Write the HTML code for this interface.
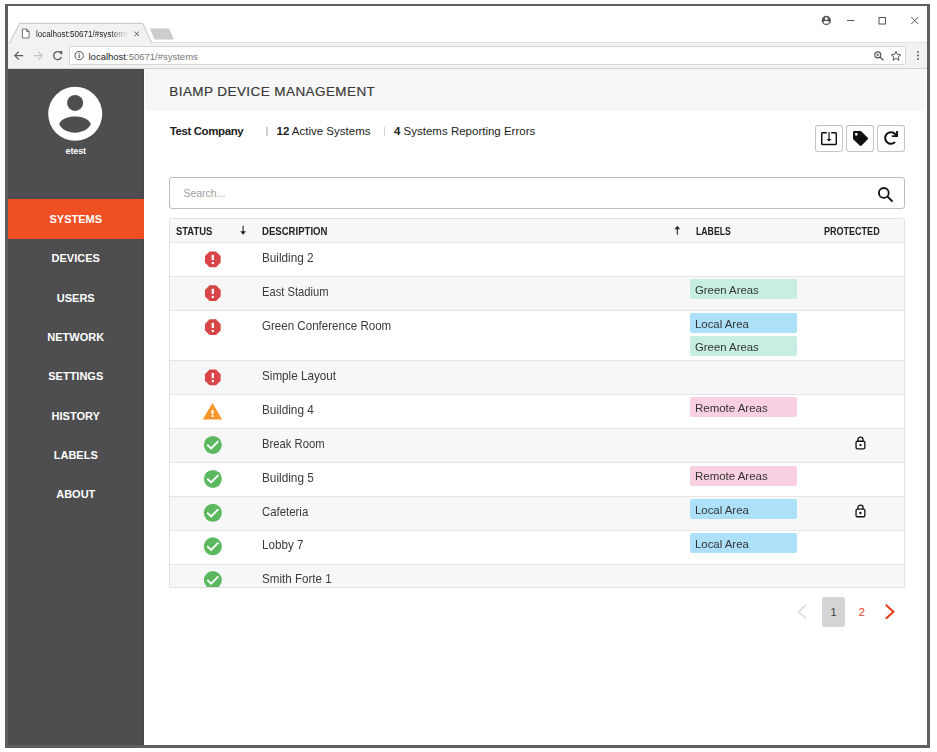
<!DOCTYPE html>
<html><head><meta charset="utf-8">
<style>
*{margin:0;padding:0;box-sizing:border-box}
html,body{width:937px;height:752px;overflow:hidden;background:#fff;font-family:"Liberation Sans",sans-serif}
.a{position:absolute}
#frame{left:5px;top:4px;width:925px;height:744px;border:3px solid #5e5e5e;border-top-width:2.5px}
#tabstrip{left:8px;top:6.5px;width:919px;height:36px;background:#fff}
#toolbar{left:8px;top:42px;width:919px;height:26.7px;background:#f2f2f2;border-top:1px solid #e3e3e3;border-bottom:1px solid #d4d4d4}
#addr{left:69px;top:45.9px;width:836.5px;height:18.8px;background:#fff;border:1px solid #d6d6d6;border-radius:2px}
#sidebar{left:8px;top:68.7px;width:135.5px;height:676.3px;background:#4e4e50}
#hdr{left:144.6px;top:68.7px;width:781px;height:42.3px;background:#f7f7f7}
.nav{position:absolute;left:8px;width:135.5px;text-align:center;color:#fff;font-weight:bold;font-size:11px;height:40px;line-height:40px}
.t{position:absolute;white-space:nowrap;line-height:1}
</style></head><body>
<div class="a" id="frame"></div>
<div class="a" id="tabstrip"></div>
<div class="a" id="toolbar"></div>
<svg class="a" style="left:0;top:0" width="937" height="70">
  <path d="M9.5 43 L19.7 23.3 L142.7 23.3 L151.8 43" fill="#f2f2f2" stroke="#c4c4c4" stroke-width="1"/>
  <path d="M150.8 29 L168.6 29 L172.9 38.9 L155 38.9 Z" fill="#cdcdcd" stroke="#c8c8c8" stroke-width="1.2" stroke-linejoin="round"/>
  <!-- page icon -->
  <path d="M22.4 29 h4.2 l2.5 2.5 v6.5 h-6.7 z M26.6 29 v2.5 h2.5" fill="#fff" stroke="#6a6a6a" stroke-width="0.95"/>
  <!-- tab close -->
  <path d="M134.4 31.5 L139 36.1 M139 31.5 L134.4 36.1" stroke="#555" stroke-width="0.95"/>
  <!-- window controls -->
  <circle cx="826.3" cy="20.45" r="4.6" fill="#555"/>
  <circle cx="826.3" cy="18.7" r="1.4" fill="#fff"/>
  <ellipse cx="826.3" cy="22.4" rx="2.9" ry="1.45" fill="#fff"/>
  <path d="M847 20.5 H854.3" stroke="#555" stroke-width="1"/>
  <rect x="879" y="17.5" width="6.5" height="6.5" fill="none" stroke="#555" stroke-width="1"/>
  <path d="M911.3 17 L918.2 24 M918.2 17 L911.3 24" stroke="#555" stroke-width="1"/>
  <!-- back / fwd / reload -->
  <path d="M14.8 55.6 H23.2 M18.8 51.6 L14.8 55.6 L18.8 59.6" fill="none" stroke="#5a5a5a" stroke-width="1.2"/>
  <path d="M33.8 55.6 H42.3 M38.3 51.6 L42.3 55.6 L38.3 59.6" fill="none" stroke="#c4c4c4" stroke-width="1.2"/>
  <path d="M61 53.4 A4 4 0 1 0 61.4 57" fill="none" stroke="#5a5a5a" stroke-width="1.3"/>
  <path d="M58.8 51.6 L62.4 51 L62 55 Z" fill="#5a5a5a"/>
</svg>
<div class="a" id="addr"></div>
<svg class="a" style="left:0;top:0" width="937" height="70">
  <circle cx="79.2" cy="55.6" r="4.2" fill="none" stroke="#555" stroke-width="1"/>
  <path d="M79.2 54.5 V58" stroke="#555" stroke-width="1.1"/>
  <circle cx="79.2" cy="53.1" r="0.65" fill="#555"/>
  <circle cx="877.8" cy="54.9" r="3.0" fill="none" stroke="#555" stroke-width="1.1"/>
  <path d="M880 57.1 L883.4 60.3" stroke="#555" stroke-width="1.3"/>
  <path d="M876.3 54.9 H879.3 M877.8 53.4 V56.4" stroke="#555" stroke-width="0.8"/>
  <path d="M896 51.3 L897.4 54.5 L900.8 54.8 L898.2 57 L899 60.3 L896 58.5 L893 60.3 L893.8 57 L891.2 54.8 L894.6 54.5 Z" fill="none" stroke="#555" stroke-width="1" stroke-linejoin="miter"/>
  <circle cx="918" cy="52" r="0.95" fill="#555"/>
  <circle cx="918" cy="55.5" r="0.95" fill="#555"/>
  <circle cx="918" cy="59" r="0.95" fill="#555"/>
</svg>
<div class="t" style="left:35.9px;top:29.6px;font-size:8.5px;color:#222;width:92px;overflow:hidden;-webkit-mask-image:linear-gradient(90deg,#000 80%,transparent)"><span style="display:inline-block;transform:scaleX(0.95);transform-origin:0 0">localhost:50671/#systems</span></div>
<div class="t" style="left:88.5px;top:51.5px;font-size:9.5px;color:#222">localhost<span style="color:#777">:50671/#systems</span></div>

<div class="a" id="sidebar"></div>
<div class="a" style="left:142px;top:68.7px;width:1.2px;height:676.3px;background:#434345"></div>
<div class="a" id="hdr"></div>
<!-- avatar -->
<svg class="a" style="left:0;top:70px" width="150" height="100">
  <circle cx="75.2" cy="43.8" r="27" fill="#fff"/>
  <circle cx="75.1" cy="32.9" r="8" fill="#4e4e50"/>
  <path d="M59.1 54.1 C62.5 43.8 87.5 43.8 90.9 54.1 C86 65.5 64 65.5 59.1 54.1 Z" fill="#4e4e50"/>
</svg>
<div class="t" style="left:8px;width:135.5px;text-align:center;top:146.9px;font-size:9px;font-weight:bold;color:#fff;letter-spacing:-0.1px">etest</div>
<div class="a" style="left:8px;top:199px;width:135.5px;height:40px;background:#f04e23"></div>
<div class="nav" style="top:198.5px">SYSTEMS</div>
<div class="nav" style="top:238.0px">DEVICES</div>
<div class="nav" style="top:277.5px">USERS</div>
<div class="nav" style="top:316.8px">NETWORK</div>
<div class="nav" style="top:356.1px">SETTINGS</div>
<div class="nav" style="top:395.5px">HISTORY</div>
<div class="nav" style="top:434.8px">LABELS</div>
<div class="nav" style="top:474.1px">ABOUT</div>

<div class="t" style="left:169.3px;top:85.2px;font-size:13.5px;color:#3a3a3a;letter-spacing:0.42px;-webkit-text-stroke:0.2px #3a3a3a">BIAMP DEVICE MANAGEMENT</div>
<div class="t" style="left:169.7px;top:126px;font-size:11.5px;color:#222;letter-spacing:-0.4px"><b>Test Company</b></div>
<div class="a" style="left:266.4px;top:127px;width:1.4px;height:8.6px;background:#d2d2d2"></div>
<div class="t" style="left:276.5px;top:126px;font-size:11.5px;color:#222"><b>12</b> Active Systems</div>
<div class="a" style="left:384px;top:127px;width:1.4px;height:8.6px;background:#d2d2d2"></div>
<div class="t" style="left:394px;top:126px;font-size:11.5px;color:#222"><b>4</b> Systems Reporting Errors</div>

<!-- search -->
<div class="a" style="left:169.4px;top:177.4px;width:736px;height:31.2px;border:1.2px solid #bdbdbd;border-radius:3px;background:#fff"></div>
<div class="t" style="left:183.4px;top:188px;font-size:10.5px;color:#a0a0a0">Search...</div>
<!-- buttons -->
<div class="a" style="left:815.3px;top:124.5px;width:27.3px;height:27.2px;border:1px solid #c6c6c6;border-top:1.4px solid #bdbdbd;border-radius:3px;background:#fff"></div>
<div class="a" style="left:846.3px;top:124.5px;width:27.4px;height:27.2px;border:1px solid #c6c6c6;border-top:1.4px solid #bdbdbd;border-radius:3px;background:#fff"></div>
<div class="a" style="left:877.4px;top:124.5px;width:27.4px;height:27.2px;border:1px solid #c6c6c6;border-top:1.4px solid #bdbdbd;border-radius:3px;background:#fff"></div>
<svg class="a" style="left:0;top:0" width="937" height="220">
  <path transform="translate(820.3 129.5) scale(0.727)" d="M12 16.6l3.5-3.7h-2.7v-9.4h-1.6v9.4H8.5l3.5 3.7zm9-13.1h-6v1.99h6v14.03H3V5.49h6V3.5H3c-1.1 0-2 .9-2 2v14c0 1.1.9 2 2 2h18c1.1 0 2-.9 2-2v-14c0-1.1-.9-2-2-2z" fill="#111"/>
  <path transform="translate(853 131) scale(0.0293)" d="M0 252.1V48C0 21.5 21.5 0 48 0h204.1a48 48 0 0 1 33.9 14.1l211.9 211.9c18.7 18.7 18.7 49.1 0 67.9L293.8 497.9c-18.7 18.7-49.1 18.7-67.9 0L14.1 286.1A48 48 0 0 1 0 252.1zM112 64c-26.5 0-48 21.5-48 48s21.5 48 48 48 48-21.5 48-48-21.5-48-48-48z" fill="#111"/>
  <path transform="translate(884 131) scale(0.0273)" d="M500.33 0h-47.41a12 12 0 0 0-12 12.57l4 82.76A247.42 247.42 0 0 0 256 8C119.34 8 7.9 119.530 8 256.19 8.1 393.07 119.1 504 256 504a247.1 247.1 0 0 0 166.18-63.91 12 12 0 0 0 .48-17.43l-34-34a12 12 0 0 0-16.38-.55A176 176 0 1 1 402.1 157.8l-101.53-4.87a12 12 0 0 0-12.57 12v47.41a12 12 0 0 0 12 12h200.33a12 12 0 0 0 12-12V12a12 12 0 0 0-12-12z" fill="#111"/>
  <!-- search icon -->
  <circle cx="883.8" cy="192.9" r="4.9" fill="none" stroke="#111" stroke-width="1.8"/>
  <path d="M887.6 196.7 L891.9 201" stroke="#111" stroke-width="1.9" stroke-linecap="round"/>
</svg>
<!--TABLE-->
<div class="a" id="tbl" style="left:169.4px;top:218.4px;width:736px;height:369.6px;border:1px solid #e2e2e2;border-radius:3px 3px 0 0;overflow:hidden;background:#fff">
<div class="a" style="left:0;top:0;width:734px;height:24px;background:#f7f7f7;border-bottom:1px solid #e4e4e4"></div>
<div class="t" style="left:5.90px;top:7.30px;font-size:10.2px;color:#222;font-weight:bold;transform:scaleX(0.9244);transform-origin:0 0">STATUS</div>
<div class="t" style="left:91.50px;top:7.30px;font-size:10.2px;color:#222;font-weight:bold;transform:scaleX(0.9395);transform-origin:0 0">DESCRIPTION</div>
<div class="t" style="left:525.80px;top:7.30px;font-size:10.2px;color:#222;font-weight:bold;transform:scaleX(0.8554);transform-origin:0 0">LABELS</div>
<div class="t" style="left:653.90px;top:7.30px;font-size:10.2px;color:#222;font-weight:bold;transform:scaleX(0.8858);transform-origin:0 0">PROTECTED</div>
<div class="a" style="left:0;top:23.0px;width:734px;height:33.9px;background:#fff;border-top:1px solid #e6e6e6"></div>
<div class="t" style="left:92.00px;top:31.65px;font-size:13.2px;color:#3a3a3a;transform:scaleX(0.8905);transform-origin:0 0">Building 2</div>
<div class="a" style="left:0;top:56.9px;width:734px;height:34.0px;background:#f7f7f7;border-top:1px solid #e6e6e6"></div>
<div class="t" style="left:92.00px;top:65.55px;font-size:13.2px;color:#3a3a3a;transform:scaleX(0.8487);transform-origin:0 0">East Stadium</div>
<div class="a" style="left:519.6px;top:60.1px;width:107.2px;height:20px;background:#c6eee3;border-radius:2px"></div>
<div class="t" style="left:524.90px;top:65.96px;font-size:11.4px;color:#333;transform:scaleX(0.9967);transform-origin:0 0">Green Areas</div>
<div class="a" style="left:0;top:90.9px;width:734px;height:50.2px;background:#fff;border-top:1px solid #e6e6e6"></div>
<div class="t" style="left:92.00px;top:99.55px;font-size:13.2px;color:#3a3a3a;transform:scaleX(0.8772);transform-origin:0 0">Green Conference Room</div>
<div class="a" style="left:519.6px;top:94.1px;width:107.2px;height:20px;background:#ade1fa;border-radius:2px"></div>
<div class="t" style="left:524.90px;top:99.96px;font-size:11.4px;color:#333;transform:scaleX(0.9996);transform-origin:0 0">Local Area</div>
<div class="a" style="left:519.6px;top:117.0px;width:107.2px;height:20px;background:#c6eee3;border-radius:2px"></div>
<div class="t" style="left:524.90px;top:122.86px;font-size:11.4px;color:#333;transform:scaleX(0.9967);transform-origin:0 0">Green Areas</div>
<div class="a" style="left:0;top:141.1px;width:734px;height:33.7px;background:#f7f7f7;border-top:1px solid #e6e6e6"></div>
<div class="t" style="left:92.00px;top:149.75px;font-size:13.2px;color:#3a3a3a;transform:scaleX(0.8861);transform-origin:0 0">Simple Layout</div>
<div class="a" style="left:0;top:174.8px;width:734px;height:34.2px;background:#fff;border-top:1px solid #e6e6e6"></div>
<div class="t" style="left:92.00px;top:183.45px;font-size:13.2px;color:#3a3a3a;transform:scaleX(0.8939);transform-origin:0 0">Building 4</div>
<div class="a" style="left:519.6px;top:178.0px;width:107.2px;height:20px;background:#f8d0e2;border-radius:2px"></div>
<div class="t" style="left:524.90px;top:183.86px;font-size:11.4px;color:#333;transform:scaleX(1.0067);transform-origin:0 0">Remote Areas</div>
<div class="a" style="left:0;top:209.0px;width:734px;height:34.0px;background:#f7f7f7;border-top:1px solid #e6e6e6"></div>
<div class="t" style="left:92.00px;top:217.65px;font-size:13.2px;color:#3a3a3a;transform:scaleX(0.8530);transform-origin:0 0">Break Room</div>
<div class="a" style="left:0;top:243.0px;width:734px;height:33.9px;background:#fff;border-top:1px solid #e6e6e6"></div>
<div class="t" style="left:92.00px;top:251.65px;font-size:13.2px;color:#3a3a3a;transform:scaleX(0.8939);transform-origin:0 0">Building 5</div>
<div class="a" style="left:519.6px;top:246.2px;width:107.2px;height:20px;background:#f8d0e2;border-radius:2px"></div>
<div class="t" style="left:524.90px;top:252.06px;font-size:11.4px;color:#333;transform:scaleX(1.0067);transform-origin:0 0">Remote Areas</div>
<div class="a" style="left:0;top:276.9px;width:734px;height:33.5px;background:#f7f7f7;border-top:1px solid #e6e6e6"></div>
<div class="t" style="left:92.00px;top:285.55px;font-size:13.2px;color:#3a3a3a;transform:scaleX(0.8639);transform-origin:0 0">Cafeteria</div>
<div class="a" style="left:519.6px;top:280.1px;width:107.2px;height:20px;background:#ade1fa;border-radius:2px"></div>
<div class="t" style="left:524.90px;top:285.96px;font-size:11.4px;color:#333;transform:scaleX(0.9996);transform-origin:0 0">Local Area</div>
<div class="a" style="left:0;top:310.4px;width:734px;height:33.8px;background:#fff;border-top:1px solid #e6e6e6"></div>
<div class="t" style="left:92.00px;top:319.05px;font-size:13.2px;color:#3a3a3a;transform:scaleX(0.8831);transform-origin:0 0">Lobby 7</div>
<div class="a" style="left:519.6px;top:313.6px;width:107.2px;height:20px;background:#ade1fa;border-radius:2px"></div>
<div class="t" style="left:524.90px;top:319.46px;font-size:11.4px;color:#333;transform:scaleX(0.9996);transform-origin:0 0">Local Area</div>
<div class="a" style="left:0;top:344.2px;width:734px;height:34.0px;background:#f7f7f7;border-top:1px solid #e6e6e6"></div>
<div class="t" style="left:92.00px;top:352.85px;font-size:13.2px;color:#3a3a3a;transform:scaleX(0.8801);transform-origin:0 0">Smith Forte 1</div>
<svg class="a" style="left:0;top:0" width="736" height="370">
<polygon points="50.65,43.55 46.05,48.15 39.55,48.15 34.95,43.55 34.95,37.05 39.55,32.45 46.05,32.45 50.65,37.05" fill="#d84648"/>
<rect x="41.70" y="35.90" width="2.2" height="5.2" fill="#fff"/>
<rect x="41.70" y="43.00" width="2.2" height="2.1" fill="#fff"/>
<polygon points="50.65,77.45 46.05,82.05 39.55,82.05 34.95,77.45 34.95,70.95 39.55,66.35 46.05,66.35 50.65,70.95" fill="#d84648"/>
<rect x="41.70" y="69.80" width="2.2" height="5.2" fill="#fff"/>
<rect x="41.70" y="76.90" width="2.2" height="2.1" fill="#fff"/>
<polygon points="50.65,111.45 46.05,116.05 39.55,116.05 34.95,111.45 34.95,104.95 39.55,100.35 46.05,100.35 50.65,104.95" fill="#d84648"/>
<rect x="41.70" y="103.80" width="2.2" height="5.2" fill="#fff"/>
<rect x="41.70" y="110.90" width="2.2" height="2.1" fill="#fff"/>
<polygon points="50.65,161.65 46.05,166.25 39.55,166.25 34.95,161.65 34.95,155.15 39.55,150.55 46.05,150.55 50.65,155.15" fill="#d84648"/>
<rect x="41.70" y="154.00" width="2.2" height="5.2" fill="#fff"/>
<rect x="41.70" y="161.10" width="2.2" height="2.1" fill="#fff"/>
<path d="M42.50 183.90 L52.10 200.60 L32.70 200.60 Z" fill="#f8962c"/>
<rect x="41.40" y="191.20" width="2.2" height="3.9" fill="#fff"/>
<rect x="41.40" y="196.10" width="2.2" height="1.9" fill="#fff"/>
<circle cx="42.85" cy="225.90" r="9" fill="#5cb85f"/>
<path d="M37.25 225.80 L41.15 229.50 L48.35 222.20" fill="none" stroke="#fff" stroke-width="1.9"/>
<path d="M687.85 222.40 V220.80 A2.6 2.6 0 0 1 693.05 220.80 V222.40" fill="none" stroke="#111" stroke-width="1.3"/>
<rect x="686.05" y="222.25" width="8.8" height="7.6" rx="1.3" fill="#fff" stroke="#111" stroke-width="1.3"/>
<circle cx="690.45" cy="226.10" r="1.2" fill="#111"/>
<circle cx="42.85" cy="259.90" r="9" fill="#5cb85f"/>
<path d="M37.25 259.80 L41.15 263.50 L48.35 256.20" fill="none" stroke="#fff" stroke-width="1.9"/>
<circle cx="42.85" cy="293.80" r="9" fill="#5cb85f"/>
<path d="M37.25 293.70 L41.15 297.40 L48.35 290.10" fill="none" stroke="#fff" stroke-width="1.9"/>
<path d="M687.85 290.30 V288.70 A2.6 2.6 0 0 1 693.05 288.70 V290.30" fill="none" stroke="#111" stroke-width="1.3"/>
<rect x="686.05" y="290.15" width="8.8" height="7.6" rx="1.3" fill="#fff" stroke="#111" stroke-width="1.3"/>
<circle cx="690.45" cy="294.00" r="1.2" fill="#111"/>
<circle cx="42.85" cy="327.30" r="9" fill="#5cb85f"/>
<path d="M37.25 327.20 L41.15 330.90 L48.35 323.60" fill="none" stroke="#fff" stroke-width="1.9"/>
<circle cx="42.85" cy="361.10" r="9" fill="#5cb85f"/>
<path d="M37.25 361.00 L41.15 364.70 L48.35 357.40" fill="none" stroke="#fff" stroke-width="1.9"/>
</svg>
</div>
<svg class="a" style="left:0;top:0" width="937" height="250">
<path d="M243.1 225.8 V232" stroke="#222" stroke-width="1.1"/><path d="M240.3 231.3 L243.1 234.8 L245.9 231.3 Z" fill="#222"/>
<path d="M677.3 228.5 V234.8" stroke="#222" stroke-width="1.1"/><path d="M674.5 229.3 L677.3 225.8 L680.1 229.3 Z" fill="#222"/>
</svg>
<!--/TABLE-->
<!--PAG-->
<div class="a" style="left:822.1px;top:597.1px;width:22.8px;height:29.9px;background:#d4d4d4;border-radius:2.5px"></div>
<div class="t" style="left:822.1px;width:22.8px;text-align:center;top:606.5px;font-size:11px;color:#444">1</div>
<div class="t" style="left:858.8px;top:606.5px;font-size:11px;color:#e8401c">2</div>
<svg class="a" style="left:0;top:580px" width="937" height="60">
  <path d="M806 25 L798.6 31.8 L806 38.6" fill="none" stroke="#d8d8d8" stroke-width="1.4"/>
  <path d="M885.8 24.8 L893.4 31.8 L885.8 38.8" fill="none" stroke="#e63b17" stroke-width="2"/>
</svg>
<!--/PAG-->
</body></html>
